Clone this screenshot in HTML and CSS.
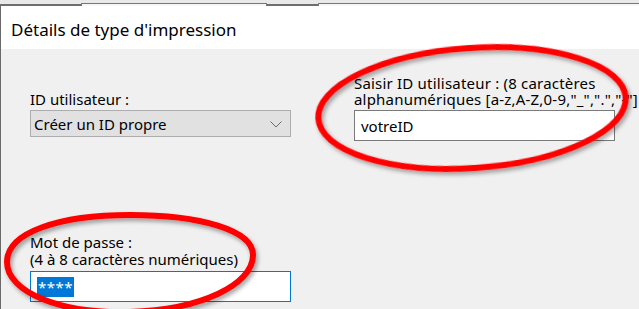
FILE: index.html
```html
<!DOCTYPE html>
<html lang="fr">
<head>
  <meta charset="UTF-8">
  <meta name="viewport" content="width=device-width, initial-scale=1.0">
  <title>Détails de type d'impression</title>
  <link rel="stylesheet" href="styles.css">
</head>
<body>
  <div class="behind">
    <span class="tab tab-a"></span>
    <span class="tab tab-b"></span>
  </div>
  <div class="dialog">
    <div class="title">Détails de type d'impression</div>
    <div class="content">
      <div class="fields">
        <label class="label label-id">ID utilisateur :</label>
        <label class="label label-input">Saisir ID utilisateur : (8 caractères<br>alphanumériques [a-z,A-Z,0-9,"_",".","-"]</label>
        <div class="select">
          <span>Créer un ID propre</span>
          <svg class="chevron" width="12" height="7" viewBox="0 0 12 7"><path d="M0.5 0.5 L6 6 L11.5 0.5" fill="none" stroke="#6b6b6b" stroke-width="1"/></svg>
        </div>
        <div class="input">votreID</div>
      </div>
      <div class="password">
        <label class="label">Mot de passe :<br>(4 à 8 caractères numériques)</label>
        <div class="input focus"><span class="sel">****</span></div>
      </div>
    </div>
  </div>
  <!-- annotations rouges -->
  <svg class="marks" width="639" height="309" viewBox="0 0 639 309">
    <defs>
      <filter id="shadow" x="-10%" y="-10%" width="120%" height="130%">
        <feDropShadow dx="2" dy="3" stdDeviation="2" flood-color="#000" flood-opacity=".35"/>
      </filter>
    </defs>
    <ellipse cx="472" cy="108" rx="154" ry="60" transform="rotate(-4 472 108)" fill="none" stroke="#ff0000" stroke-width="6" filter="url(#shadow)"/>
    <path d="M7 262 C7 232 60 215 130 215 C200 215 253 230 253 255 C253 285 200 310 130 312 C60 314 7 292 7 262 Z" fill="none" stroke="#ff0000" stroke-width="6" filter="url(#shadow)"/>
  </svg>
</body>
</html>
```

FILE: styles.css
```css
*{
  margin: 0;
  padding: 0;
  box-sizing: border-box;
}
html,body{
  width: 639px;
  height: 309px;
  overflow: hidden;
}
body{
  position: relative;
  background-color: #f0f0f0;
  font-family: "Noto Sans", "Open Sans", sans-serif;
  font-size: 15px;
  color: #000;
}
.behind{
  position: relative;
  height: 6px;
  background-color: #e9e9e9;
  border-bottom: 2px solid #6e6e6e;
}
.tab{
  position: absolute;
  top: 3px;
  height: 3px;
  border: 1px solid #777;
  border-bottom: none;
  background-color: #f7f7f7;
}
.tab-a{
  left: 81px;
  width: 186px;
}
.tab-b{
  left: 318px;
  width: 330px;
}
.dialog{
  height: 303px;
  border-left: 1px solid #6a6a6a;
  display: flex;
  flex-direction: column;
}
.title{
  height: 43px;
  flex: none;
  background-color: #fff;
  padding: 12px 0 0 10px;
  font-size: 17px;
  white-space: nowrap;
}
.content{
  flex: 1;
  background-color: #f0f0f0;
  padding: 26px 0 0 29px;
}
.fields{
  display: grid;
  grid-template-columns: 261px 261px;
  column-gap: 63px;
}
.label{
  display: block;
  line-height: 16px;
  white-space: nowrap;
}
.label-id,
.label-input{
  align-self: end;
  padding-bottom: 3px;
}
.label-input{
  letter-spacing: .2px;
}
.select{
  height: 27px;
  display: flex;
  align-items: center;
  justify-content: space-between;
  padding: 0 8px 0 3px;
  background-color: #e1e1e1;
  border: 1px solid #adadad;
}
.chevron{
  margin-top: 1px;
}
.input{
  height: 31px;
  display: flex;
  align-items: center;
  padding: 0 6px;
  background-color: #fff;
  border: 1px solid #7a7a7a;
}
.password{
  margin-top: 93px;
  width: 261px;
}
.password .label{
  line-height: 17px;
  padding-bottom: 3px;
}
.input.focus{
  border-color: #0078d7;
}
.sel{
  background-color: #0078d7;
  color: #fff;
  padding: 0 1px;
  letter-spacing: .5px;
}
.marks{
  position: absolute;
  left: 0;
  top: 0;
  pointer-events: none;
}
```
